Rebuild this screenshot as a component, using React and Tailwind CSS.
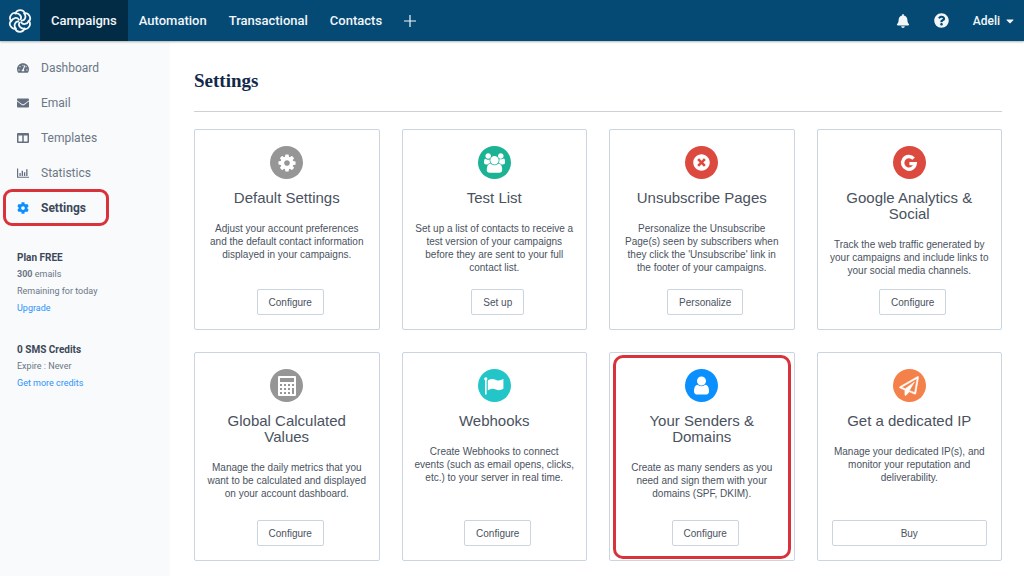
import React from "react";
import {
  FaBell,
  FaCaretDown,
  FaCog,
  FaEnvelope,
  FaQuestionCircle,
  FaTachometerAlt,
  FaTimesCircle,
} from "react-icons/fa";

const PETALS = [0, 60, 120, 180, 240, 300];

function Logo() {
  return (
    <svg viewBox="-12 -12 24 24" className="size-6" fill="none" stroke="currentColor" strokeWidth="1.8" strokeLinecap="round" aria-hidden="true">
      {PETALS.map((angle) => (
        <path key={angle} transform={`rotate(${angle})`} d="M4.8 -7.4C3.6 -11.8 -3 -12 -4.6 -7.4M-4.6 -7.4C-0.8 -8.2 2.2 -4.6 0.6 -1.6" />
      ))}
    </svg>
  );
}

function ColumnsIcon({ className }) {
  return (
    <svg viewBox="0 0 24 24" fill="currentColor" fillRule="evenodd" className={className} aria-hidden="true">
      <path d="M2 2H22Q24 2 24 4V20Q24 22 22 22H2Q0 22 0 20V4Q0 2 2 2ZM3 7V19H10.5V7ZM13.5 7V19H21V7Z" />
    </svg>
  );
}

function BarsIcon({ className }) {
  return (
    <svg viewBox="0 0 2048 1792" fill="currentColor" className={className} aria-hidden="true">
      <path d="M640 896v512h-224v-512h224zm384-384v896h-224v-896h224zm1024 1024v160h-2048v-1568h200v1408h1848zm-640-768v640h-224v-640h224zm384-512v1152h-224v-1152h224z" />
    </svg>
  );
}

function CogGlyph() {
  return (
    <svg viewBox="0 0 1792 1792" fill="currentColor" className="size-5" aria-hidden="true">
      <path d="M1152 896q0-106-75-181t-181-75-181 75-75 181 75 181 181 75 181-75 75-181zm512-109v222q0 12-8 23t-20 13l-185 28q-19 54-39 91 35 50 107 138 10 12 10 25t-9 23q-27 37-99 108t-94 71q-12 0-26-9l-138-108q-44 23-91 38-16 136-29 186-7 28-36 28h-222q-14 0-24.5-8.5t-11.5-21.5l-28-184q-49-16-90-37l-141 107q-10 9-25 9-14 0-25-11-126-114-165-168-7-10-7-23 0-12 8-23 15-21 51-66.5t54-70.5q-27-50-41-99l-183-27q-13-2-21-12.5t-8-23.5v-222q0-12 8-23t19-13l186-28q14-46 39-92-40-57-107-138-10-12-10-24 0-10 9-23 26-36 98.5-107.5t94.5-71.5q13 0 26 10l138 107q44-23 91-38 16-136 29-186 7-28 36-28h222q14 0 24.5 8.5t11.5 21.5l28 184q49 16 90 37l142-107q9-9 24-9 13 0 25 10 129 119 165 170 7 8 7 22 0 12-8 23-15 21-51 66.5t-54 70.5q26 50 41 98l183 28q13 2 21 12.5t8 23.5z" />
    </svg>
  );
}

function UsersGlyph() {
  return (
    <svg viewBox="0 0 1920 1792" fill="currentColor" className="h-5 w-[21px]" aria-hidden="true">
      <path d="M593 896q-162 5-265 128h-134q-82 0-138-40.5t-56-118.5q0-353 124-353 6 0 43.5 21t97.5 42.5 119 21.5q67 0 133-23-5 37-5 66 0 159 93 293zm1071 637q0 120-73 189.5t-194 69.5h-874q-121 0-194-69.5t-73-189.5q0-53 3.5-103.5t14-109 26.5-108.5 43-97.5 62-81 85.5-53.5 111.5-20q10 0 43 21.5t73 48 107 48 135 21.5 135-21.5 107-48 73-48 43-21.5q61 0 111.5 20t85.5 53.5 62 81 43 97.5 26.5 108.5 14 109 3.5 103.5zm-1024-1277q0 106-75 181t-181 75-181-75-75-181 75-181 181-75 181 75 75 181zm704 384q0 159-112.5 271.5t-271.5 112.5-271.5-112.5-112.5-271.5 112.5-271.5 271.5-112.5 271.5 112.5 112.5 271.5zm576 225q0 78-56 118.5t-138 40.5h-134q-103-123-265-128 93-134 93-293 0-29-5-66 66 23 133 23 59 0 119-21.5t97.5-42.5 43.5-21q124 0 124 353zm-128-609q0 106-75 181t-181 75-181-75-75-181 75-181 181-75 181 75 75 181z" />
    </svg>
  );
}

function GoogleGlyph() {
  return (
    <svg viewBox="0 0 18 18" fill="none" stroke="currentColor" strokeWidth="3.4" className="size-[18px]" aria-hidden="true">
      <path d="M13.6 4.6A6.3 6.3 0 1 0 15.2 9.6H9.4" />
    </svg>
  );
}

function CalculatorGlyph() {
  return (
    <svg viewBox="0 0 18 20" className="h-5 w-[18px]" aria-hidden="true">
      <path
        fill="currentColor"
        fillRule="evenodd"
        d="M1 0H17Q18 0 18 1V19Q18 20 17 20H1Q0 20 0 19V1Q0 0 1 0ZM2 2V6H16V2ZM2 8V10H4V8ZM6 8V10H8V8ZM10 8V10H12V8ZM14 8V10H16V8ZM2 12V14H4V12ZM6 12V14H8V12ZM10 12V14H12V12ZM14 12V18H16V12ZM2 16V18H4V16ZM6 16V18H8V16ZM10 16V18H12V16Z"
      />
    </svg>
  );
}

function FlagGlyph() {
  return (
    <svg viewBox="0 0 20 18" fill="currentColor" className="h-[18px] w-5" aria-hidden="true">
      <circle cx="1.8" cy="1.8" r="1.6" />
      <path d="M1 2H2.6V17.6H1ZM3.8 3.4C7 1.4 9.4 1.6 12 2.9C14.4 4 16.8 3.4 19.4 2V11.7C16.8 13.2 14.4 13.7 12 12.5C9.4 11.2 7 11.3 3.8 13.3Z" />
    </svg>
  );
}

function UserGlyph() {
  return (
    <svg viewBox="0 0 1792 1792" fill="currentColor" className="size-[21px]" aria-hidden="true">
      <path d="M1536 1399q0 109-62.5 187t-150.5 78h-854q-88 0-150.5-78t-62.5-187q0-85 8.5-160.5t31.5-152 58.5-131 94-89 134.5-34.5q131 128 313 128t313-128q76 0 134.5 34.5t94 89 58.5 131 31.5 152 8.5 160.5zm-256-887q0 159-112.5 271.5t-271.5 112.5-271.5-112.5-112.5-271.5 112.5-271.5 271.5-112.5 271.5 112.5 112.5 271.5z" />
    </svg>
  );
}

function PlaneGlyph() {
  return (
    <svg viewBox="-40 -40 1872 1872" fill="currentColor" stroke="currentColor" strokeWidth="50" className="size-5" aria-hidden="true">
      <path d="M1764 11q33 24 27 64l-256 1536q-5 29-32 45-14 8-31 8-11 0-24-5l-527-215-298 327q-18 21-47 21-14 0-23-4-19-7-30-23.5t-11-36.5v-452l-472-193q-37-14-40-55-3-39 32-59l1664-960q35-21 68 2zm-342 1499l221-1323-1434 827 336 137 863-639-478 797z" />
    </svg>
  );
}

const NAV = ["Campaigns", "Automation", "Transactional", "Contacts"];

const SIDE = [
  { label: "Dashboard", Icon: FaTachometerAlt },
  { label: "Email", Icon: FaEnvelope },
  { label: "Templates", Icon: ColumnsIcon },
  { label: "Statistics", Icon: BarsIcon },
  { label: "Settings", Icon: FaCog, active: true },
];

const CARDS = [
  { title: "Default Settings", text: "Adjust your account preferences and the default contact information displayed in your campaigns.", action: "Configure", color: "bg-[#969696]", icon: <CogGlyph /> },
  { title: "Test List", text: "Set up a list of contacts to receive a test version of your campaigns before they are sent to your full contact list.", action: "Set up", color: "bg-[#1bb394]", icon: <UsersGlyph /> },
  { title: "Unsubscribe Pages", text: "Personalize the Unsubscribe Page(s) seen by subscribers when they click the 'Unsubscribe' link in the footer of your campaigns.", action: "Personalize", color: "bg-[#dc4a3f]", icon: <FaTimesCircle className="size-[17px]" aria-hidden="true" /> },
  { title: "Google Analytics & Social", text: "Track the web traffic generated by your campaigns and include links to your social media channels.", action: "Configure", color: "bg-[#dc4a3f]", icon: <GoogleGlyph /> },
  { title: "Global Calculated Values", text: "Manage the daily metrics that you want to be calculated and displayed on your account dashboard.", action: "Configure", color: "bg-[#969696]", icon: <CalculatorGlyph /> },
  { title: "Webhooks", text: "Create Webhooks to connect events (such as email opens, clicks, etc.) to your server in real time.", action: "Configure", color: "bg-[#23c6c8]", icon: <FlagGlyph /> },
  { title: "Your Senders & Domains", text: "Create as many senders as you need and sign them with your domains (SPF, DKIM).", action: "Configure", color: "bg-[#0a8fff]", icon: <UserGlyph />, highlight: true },
  { title: "Get a dedicated IP", text: "Manage your dedicated IP(s), and monitor your reputation and deliverability.", action: "Buy", wide: true, color: "bg-[#f5814a]", icon: <PlaneGlyph /> },
];

function Header() {
  return (
    <header className="relative z-10 flex h-[41px] items-stretch bg-[#044a75] text-[#f2f6f9] shadow-[0_1px_2px_rgba(0,0,0,0.3)]">
      <a href="#home" aria-label="Home" className="flex w-10 items-center justify-center">
        <Logo />
      </a>
      <nav className="flex items-stretch text-[13px] font-medium">
        {NAV.map((label, i) => (
          <a key={label} href={`#${label}`} className={i === 0 ? "flex items-center bg-[#022c45] px-[11px]" : "flex items-center px-[11px]"}>
            {label}
          </a>
        ))}
      </nav>
      <button type="button" aria-label="Add" className="flex items-center px-[11px]">
        <svg viewBox="0 0 12 12" className="size-3" stroke="currentColor" strokeWidth="1.2" aria-hidden="true">
          <path d="M6 0V12M0 6H12" />
        </svg>
      </button>
      <div className="ml-auto flex items-center gap-6 pr-2">
        <button type="button" aria-label="Notifications">
          <FaBell className="size-3.5" aria-hidden="true" />
        </button>
        <button type="button" aria-label="Help">
          <FaQuestionCircle className="size-[15px]" aria-hidden="true" />
        </button>
        <button type="button" className="flex items-center gap-1 text-[12px] font-medium">
          Adeli
          <FaCaretDown className="size-3" aria-hidden="true" />
        </button>
      </div>
    </header>
  );
}

function Sidebar() {
  return (
    <aside className="w-[170px] shrink-0 bg-[#f8fafc] pt-[9px] text-[#6b7785]">
      <nav>
        {SIDE.map(({ label, Icon, active }) => (
          <a
            key={label}
            href={`#${label}`}
            className={
              active
                ? "relative flex h-[35px] items-center gap-3 pl-[17px] text-[12px] font-bold text-[#3c4858]"
                : "relative flex h-[35px] items-center gap-3 pl-[17px] text-[12px]"
            }
          >
            <Icon className={active ? "size-3 text-[#0a8fff]" : "size-3 text-[#64707f]"} />
            {label}
            {active && <span className="absolute -top-px left-[3px] h-[37px] w-[106px] rounded-[9px] border-3 border-[#d8333a]" />}
          </a>
        ))}
      </nav>
      <section className="mt-6 pl-[17px] text-[9px] leading-[17px]">
        <h2 className="text-[10px] leading-[17px] font-bold text-[#3c4858]">Plan FREE</h2>
        <p><strong>300</strong> emails</p>
        <p>Remaining for today</p>
        <a href="#upgrade" className="block text-[#2c93fa]">Upgrade</a>
      </section>
      <section className="mt-6 pl-[17px] text-[9px] leading-[17px]">
        <h2 className="text-[10px] leading-[17px] font-bold text-[#3c4858]">0 SMS Credits</h2>
        <p>Expire : Never</p>
        <a href="#credits" className="block text-[#2c93fa]">Get more credits</a>
      </section>
    </aside>
  );
}

function Card({ title, text, action, wide, color, icon, highlight }) {
  return (
    <article className="relative flex flex-col items-center rounded-xs border border-[#cbd5df] px-3.5 pt-4 pb-3.5 text-center font-['Liberation_Sans',sans-serif] text-[#4a5260]">
      <div className={`flex size-[33px] items-center justify-center rounded-full text-white ${color}`}>{icon}</div>
      <h2 className="mt-[11px] text-[15px] leading-4">{title}</h2>
      <p className="-mx-0.5 mt-4 mb-3 text-[10px] leading-[13px]">{text}</p>
      <div className={wide ? "mt-auto flex w-full" : "mt-auto flex pl-[7px]"}>
        <button
          type="button"
          className={
            wide
              ? "h-[26px] w-full rounded-xs border border-[#cbd5df] text-[10px]"
              : "h-[26px] rounded-xs border border-[#cbd5df] px-[11px] text-[10px]"
          }
        >
          {action}
        </button>
      </div>
      {highlight && <span className="pointer-events-none absolute inset-x-[3px] top-0.5 bottom-px rounded-[10px] border-3 border-[#d8333a]" />}
    </article>
  );
}

export default function App() {
  return (
    <div className="flex min-h-screen flex-col bg-white font-[Roboto,sans-serif]">
      <Header />
      <div className="flex grow">
        <Sidebar />
        <main className="grow pt-7 pr-[22px] pb-[15px] pl-6">
          <h1 className="border-b border-[#cdd1d5] pb-[18px] font-['Liberation_Serif',serif] text-[19px] leading-6 font-bold text-[#13294b]">Settings</h1>
          <div className="mt-[17px] grid grid-cols-4 grid-rows-[minmax(201px,auto)_minmax(209px,auto)] gap-[22px]">
            {CARDS.map((card) => (
              <Card key={card.title} {...card} />
            ))}
          </div>
        </main>
      </div>
    </div>
  );
}
